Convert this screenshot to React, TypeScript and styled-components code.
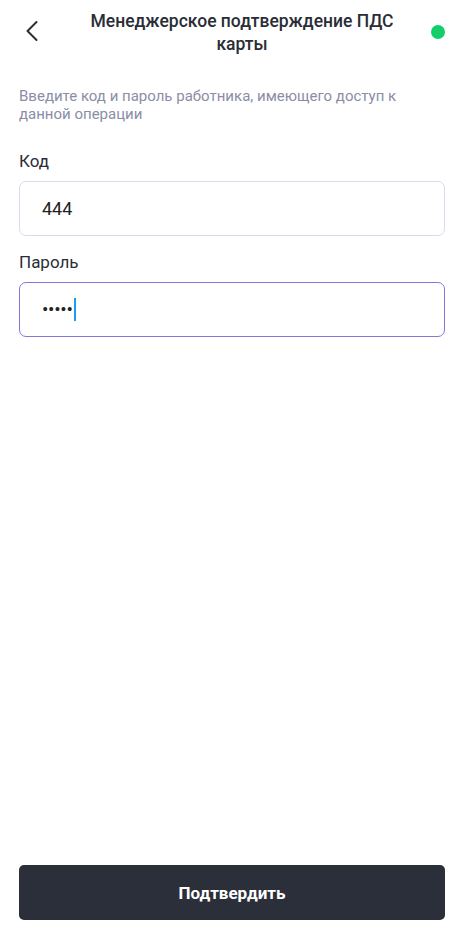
import React, { FC } from 'react'
import styled, { createGlobalStyle } from 'styled-components'

const GlobalStyle = createGlobalStyle`
    * { box-sizing: border-box; }
    body {
        margin: 0;
        background: #ffffff;
        font-family: Roboto, "Noto Sans", sans-serif;
        color: #2a2d36;
    }
`

const Screen = styled.div`
    width: 461px;
    height: 934px;
    display: flex;
    flex-direction: column;
    padding: 0 16px 14px 19px;
`

const Header = styled.div`
    display: flex;
    align-items: flex-start;
    padding-top: 10px;
    height: 76px;
`

const BackButton = styled.button`
    width: 40px;
    height: 44px;
    border: none;
    background: none;
    padding: 0;
    margin-left: -6px;
    margin-top: -1px;
    display: flex;
    align-items: center;
    justify-content: center;
    cursor: pointer;
`

const Title = styled.h1`
    flex: 1;
    margin: 0;
    text-align: center;
    font-size: 17.5px;
    line-height: 23px;
    font-weight: 500;
    color: #2a2d36;
    padding: 0 12px;
`

const StatusDot = styled.span`
    width: 14px;
    height: 14px;
    border-radius: 50%;
    background: #12cf6a;
    margin-top: 15px;
`

const Hint = styled.p`
    margin: 11px 0 0;
    font-size: 15px;
    line-height: 18px;
    color: #8b8da6;
    padding-right: 30px;
`

const Form = styled.div`
    margin-top: 12px;
`

const Label = styled.div`
    margin-top: 15px;
    font-size: 17px;
    line-height: 22px;
    color: #2a2d36;
`

const Field = styled.div<{ $active?: boolean }>`
    margin-top: 9px;
    height: 55px;
    width: 426px;
    border: 1px solid ${p => (p.$active ? '#8676dc' : '#dcdaea')};
    border-radius: 7px;
    display: flex;
    align-items: center;
    padding-left: 22px;
    font-size: 18px;
    color: #222;
`

const Dots = styled.span`
    font-size: 19px;
    letter-spacing: -0.3px;
    color: #222;
`

const Caret = styled.span`
    display: inline-block;
    width: 2px;
    height: 23px;
    background: #1e9bf0;
    margin-left: 1px;
`

const Spacer = styled.div`
    flex: 1;
`

const SubmitButton = styled.button`
    width: 426px;
    height: 55px;
    border: none;
    border-radius: 5px;
    background: #2b2f3a;
    color: #ffffff;
    font-family: Roboto, "Noto Sans", sans-serif;
    font-size: 17px;
    font-weight: 700;
    cursor: pointer;
`

const App: FC = () => {
    return (
        <>
            <GlobalStyle />
            <Screen>
                <Header>
                    <BackButton aria-label="Назад">
                        <svg width="24" height="24" viewBox="0 0 24 24" fill="none">
                            <path d="M15.5 3 L6.5 12 L15.5 21" stroke="#2a2d36" strokeWidth="2" strokeLinecap="round" strokeLinejoin="round" />
                        </svg>
                    </BackButton>
                    <Title>Менеджерское подтверждение ПДС карты</Title>
                    <StatusDot />
                </Header>
                <Hint>Введите код и пароль работника, имеющего доступ к данной операции</Hint>
                <Form>
                    <Label>Код</Label>
                    <Field>444</Field>
                    <Label>Пароль</Label>
                    <Field $active>
                        <Dots>•••••</Dots>
                        <Caret />
                    </Field>
                </Form>
                <Spacer />
                <SubmitButton>Подтвердить</SubmitButton>
            </Screen>
        </>
    )
}

export default App
